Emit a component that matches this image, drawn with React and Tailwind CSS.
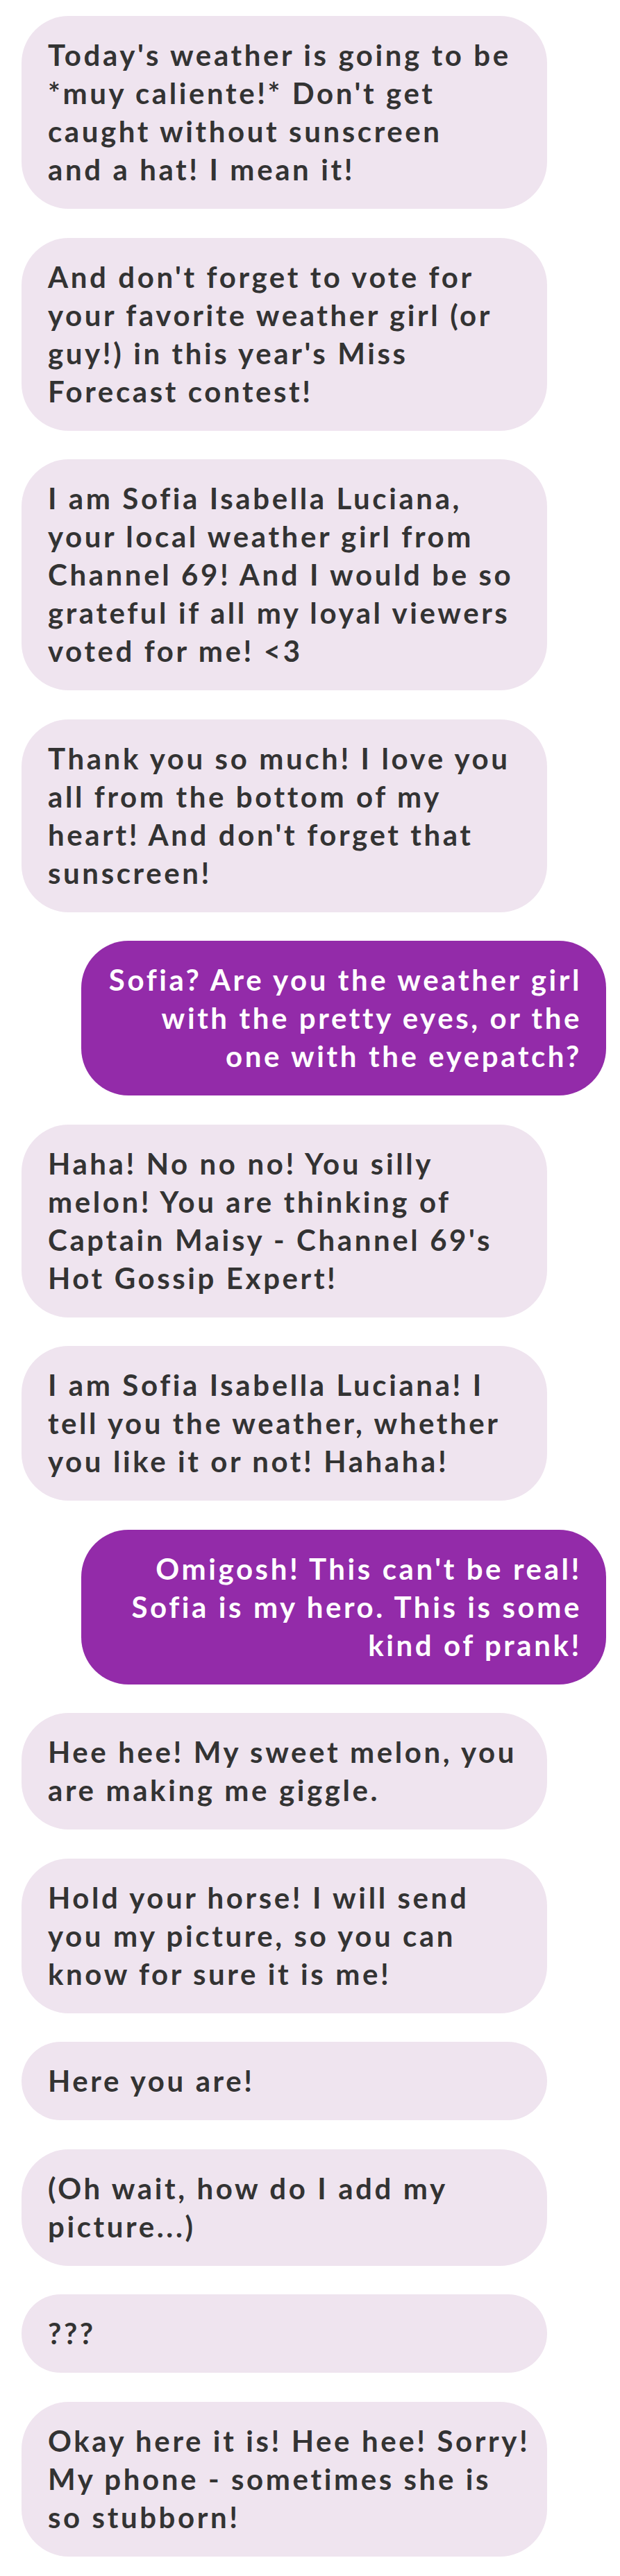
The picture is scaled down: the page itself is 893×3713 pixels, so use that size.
import React from "react";

const messages = [
  { from: "her", lines: ["Today's weather is going to be", "*muy caliente!* Don't get", "caught without sunscreen", "and a hat! I mean it!"] },
  { from: "her", lines: ["And don't forget to vote for", "your favorite weather girl (or", "guy!) in this year's Miss", "Forecast contest!"] },
  { from: "her", lines: ["I am Sofia Isabella Luciana,", "your local weather girl from", "Channel 69! And I would be so", "grateful if all my loyal viewers", "voted for me! <3"] },
  { from: "her", lines: ["Thank you so much! I love you", "all from the bottom of my", "heart! And don't forget that", "sunscreen!"] },
  { from: "me", lines: ["Sofia? Are you the weather girl", "with the pretty eyes, or the", "one with the eyepatch?"] },
  { from: "her", lines: ["Haha! No no no! You silly", "melon! You are thinking of", "Captain Maisy - Channel 69's", "Hot Gossip Expert!"] },
  { from: "her", lines: ["I am Sofia Isabella Luciana! I", "tell you the weather, whether", "you like it or not! Hahaha!"] },
  { from: "me", lines: ["Omigosh! This can't be real!", "Sofia is my hero. This is some", "kind of prank!"] },
  { from: "her", lines: ["Hee hee! My sweet melon, you", "are making me giggle."] },
  { from: "her", lines: ["Hold your horse! I will send", "you my picture, so you can", "know for sure it is me!"] },
  { from: "her", lines: ["Here you are!"] },
  { from: "her", lines: ["(Oh wait, how do I add my", "picture...)"] },
  { from: "her", lines: ["???"] },
  { from: "her", lines: ["Okay here it is! Hee hee! Sorry!", "My phone - sometimes she is", "so stubborn!"] },
];

const Bubble = ({ msg }) => {
  const mine = msg.from === "me";
  return (
    <div
      className={
        mine
          ? "self-end mr-[20px] w-[756px] rounded-[68px] bg-[#932ba9] pl-[38px] pr-[35px] py-[29px] text-right text-white"
          : "self-start ml-[31px] w-[757px] rounded-[68px] bg-[#efe4ef] px-[38px] py-[29px] text-[#333333]"
      }
    >
      {msg.lines.map((line, i) => (
        <div key={i} className="whitespace-nowrap">
          {line}
        </div>
      ))}
    </div>
  );
};

export default function App() {
  return (
    <div className="min-h-screen w-full bg-white font-['Lato',sans-serif] text-[42px] font-bold leading-[55px] tracking-[3.6px]">
      <div className="flex flex-col gap-[41.5px] pt-[23px] pb-[29px]">
        {messages.map((m, i) => (
          <Bubble key={i} msg={m} />
        ))}
      </div>
    </div>
  );
}
